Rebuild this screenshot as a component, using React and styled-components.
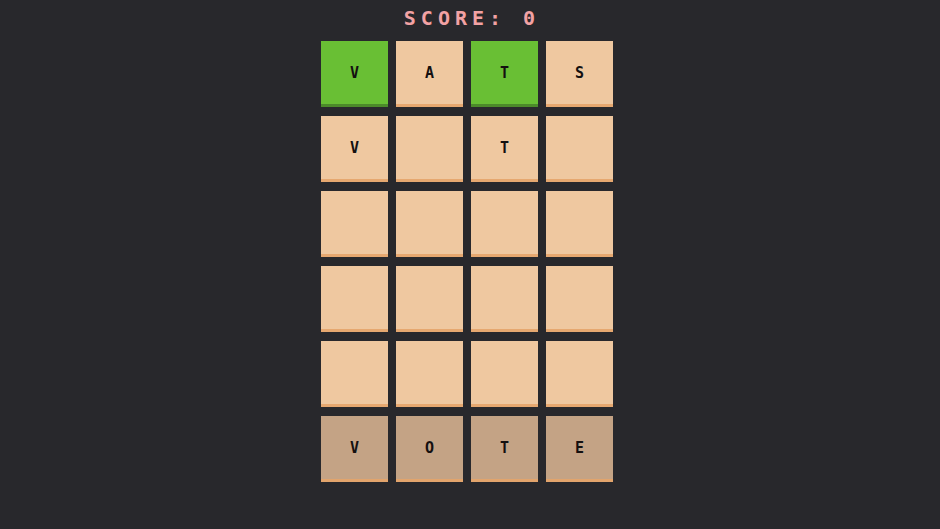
import React from 'react'
import styled, { createGlobalStyle } from 'styled-components'

const GlobalStyle = createGlobalStyle`
  html, body {
    margin: 0;
    padding: 0;
    background-color: #28282c;
  }
`

const Page = styled.div`
  width: 940px;
  height: 529px;
  display: flex;
  flex-direction: column;
  align-items: center;
  background-color: #28282c;
  font-family: "DejaVu Sans Mono", "Liberation Mono", monospace;
`

const Score = styled.div`
  margin-top: 6px;
  margin-left: 4px;
  height: 24px;
  line-height: 24px;
  font-size: 20px;
  font-weight: bold;
  letter-spacing: 5px;
  color: #f2a2a4;
`

const Board = styled.div`
  margin-top: 11px;
  margin-right: 6px;
  display: grid;
  grid-template-columns: repeat(4, 67px);
  grid-auto-rows: 66px;
  row-gap: 9px;
  column-gap: 8px;
`

const tileColors = {
  correct: ['#69bf34', '#4c8a2a'],
  empty: ['#efc8a0', '#e6a870'],
  answer: ['#c4a385', '#e2a46c']
}

const Tile = styled.div`
  box-sizing: border-box;
  display: flex;
  align-items: center;
  justify-content: center;
  padding-top: 1px;
  background-color: ${p => tileColors[p.$kind][0]};
  border-bottom: 3px solid ${p => tileColors[p.$kind][1]};
  color: #141010;
  font-size: 15px;
  font-weight: bold;
`

const rows = [
  [['V', 'correct'], ['A', 'empty'], ['T', 'correct'], ['S', 'empty']],
  [['V', 'empty'], ['', 'empty'], ['T', 'empty'], ['', 'empty']],
  [['', 'empty'], ['', 'empty'], ['', 'empty'], ['', 'empty']],
  [['', 'empty'], ['', 'empty'], ['', 'empty'], ['', 'empty']],
  [['', 'empty'], ['', 'empty'], ['', 'empty'], ['', 'empty']],
  [['V', 'answer'], ['O', 'answer'], ['T', 'answer'], ['E', 'answer']]
]

export default function App () {
  return <Page>
    <GlobalStyle />
    <Score>SCORE: 0</Score>
    <Board>
      {rows.flat().map(([letter, kind], i) => (
        <Tile key={i} $kind={kind}>{letter}</Tile>
      ))}
    </Board>
  </Page>
}
